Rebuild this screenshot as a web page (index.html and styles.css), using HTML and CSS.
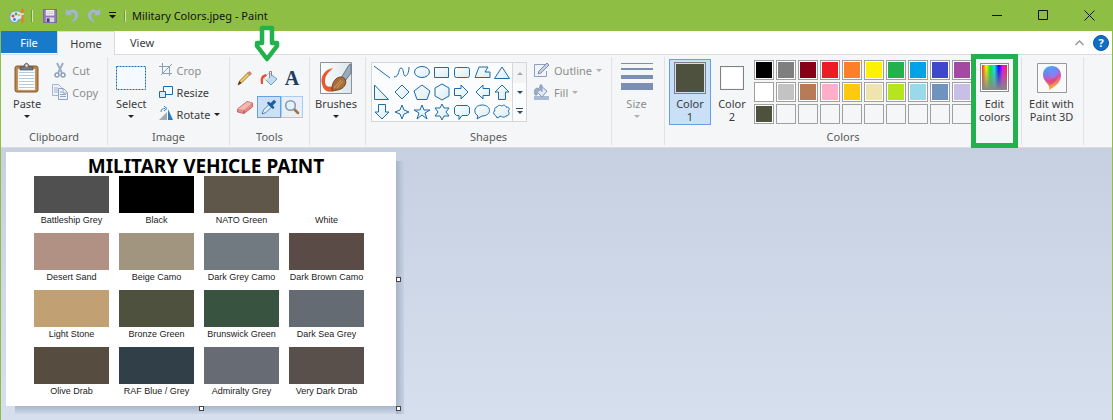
FILE: index.html
```html
<!DOCTYPE html>
<html lang="en">
<head>
<meta charset="utf-8">
<title>Military Colors.jpeg - Paint</title>
<link rel="stylesheet" href="styles.css">
</head>
<body>
<div class="window">
  <header class="titlebar">
    <svg class="app-icon" width="16" height="16" viewBox="0 0 16 16"><path d="M7 3C3 3 .5 6 .8 9.500 1 13 4 15 7 14.500c2-.3 1-2.500 3-3 2-.4 3.500-.5 3.500-3.500C13.500 5 10.500 3 7 3z" fill="#d9ecf8" stroke="#6e9fc4"/><circle cx="4" cy="8" r="1.500" fill="#e8463a"/><circle cx="7" cy="6" r="1.400" fill="#4aa84c"/><circle cx="10" cy="7" r="1.300" fill="#e9b52c"/><circle cx="5.500" cy="11.500" r="1.400" fill="#3f7fd0"/><path d="M12.500 15V6l-.5-4 1.500-2 1.500 2-.5 4v9z" fill="#ea7b25"/><path d="M12.300 5h2.400v2h-2.400z" fill="#ddd"/></svg>
    <i class="tick"></i>
    <button class="tool save" aria-label="Save"><svg width="14" height="14" viewBox="0 0 15 15"><path d="M.5.5h14v14h-14z" fill="#9078bb" stroke="#7a62a6"/><path d="M3 1h9v6H3z" fill="#f4f1fa"/><path d="M4 3h7M4 5h7" stroke="#c9bddd"/><path d="M3 9h9v5H3z" fill="#ddd6e9"/><path d="M4 10h3v4H4z" fill="#51377e"/></svg></button>
    <button class="tool undo" aria-label="Undo"><svg width="14" height="15" viewBox="0 0 14 15"><path d="M1 1v6h6L5 5c3-1.500 5 0 5 2.500S8.500 12 6 13.500c4 0 7-2.500 7-6.500S8.500 0 3 3z" fill="#a4b6d0" stroke="#9db1ca" stroke-width=".5"/></svg></button>
    <button class="tool redo" aria-label="Redo"><svg width="14" height="15" viewBox="0 0 14 15"><path d="M13 1v6H7l2-2C6 3.500 4 5 4 7.500S5.500 12 8 13.500C4 13.500 1 11 1 7S5.500 0 11 3z" fill="#a4b6d0" stroke="#9db1ca" stroke-width=".5"/></svg></button>
    <button class="tool more" aria-label="Customize Quick Access Toolbar"><svg width="7" height="7" viewBox="0 0 7 7"><path d="M0 .5h7" stroke="#111"/><path d="M0 3h7L3.500 6.500z" fill="#111"/></svg></button>
    <i class="tick"></i>
    <h1 class="title">Military Colors.jpeg - Paint</h1>
    <div class="controls">
      <button aria-label="Minimize"><svg width="11" height="11"><path d="M0 5.500h10" stroke="#111"/></svg></button>
      <button aria-label="Maximize"><svg width="11" height="11"><path d="M.5.5h9v9h-9z" fill="none" stroke="#111"/></svg></button>
      <button aria-label="Close"><svg width="11" height="11"><path d="M.5.5l10 10M10.500.5l-10 10" stroke="#111"/></svg></button>
    </div>
  </header>

  <nav class="tabs">
    <button class="tab file">File</button>
    <button class="tab active">Home</button>
    <button class="tab">View</button>
    <div class="help">
      <button aria-label="Collapse ribbon"><svg width="9" height="6"><path d="M.5 5l4-4 4 4" fill="none" stroke="#999" stroke-width="1.500"/></svg></button>
      <button class="question" aria-label="Help">?</button>
    </div>
  </nav>

  <main class="ribbon">
    <section class="group clipboard">
      <div class="group-body">
        <button class="big"><svg width="26" height="32" viewBox="0 0 26 32"><rect x="1" y="4" width="23" height="26" rx="2" fill="#b98647" stroke="#8b5c29"/><path d="M4 7h17v21H4z" fill="#fdfeff" stroke="#c5cbd2" stroke-width=".5"/><path d="M5 10.500h15M5 13.500h15M5 16.500h15M5 19.500h15M5 22.500h15M5 25.500h15" stroke="#b5cbd7"/><path d="M6 8V5h4c0-5 5-5 5 0h4v3z" fill="#777d84" stroke="#454a50" stroke-width=".7"/><circle cx="12.500" cy="3.500" r="1.200" fill="#e5e8eb"/></svg><span>Paste</span><i class="caret"></i></button>
        <div class="stack">
          <button class="row off"><svg width="16" height="16" viewBox="0 0 16 16"><path d="M5 1l5 10M11 1L6 11" stroke="#9eaec9" stroke-width="2"/><circle cx="5" cy="13" r="2" fill="none" stroke="#8d9fbd" stroke-width="1.500"/><circle cx="11" cy="13" r="2" fill="none" stroke="#8d9fbd" stroke-width="1.500"/></svg>Cut</button>
          <button class="row off"><svg width="16" height="16" viewBox="0 0 16 16"><path d="M.5.5h6l3 3v8h-9z" fill="#eef2f9" stroke="#a3b3d0"/><path d="M2 4h4M2 6h5M2 8h5" stroke="#a3b3d0"/><path d="M6.500 4.500h5l4 4v7h-9z" fill="#eef2f9" stroke="#8fa3c5"/><path d="M11 4.500V9h4M8 8h2M8 10.500h6M8 12.500h6" fill="none" stroke="#8fa3c5"/></svg>Copy</button>
        </div>
      </div>
      <h2>Clipboard</h2>
    </section>

    <section class="group image">
      <div class="group-body">
        <button class="big"><svg width="30" height="32" viewBox="0 0 30 32"><path d="M.5 4.500h29v23H.5z" fill="#f4faff" stroke="#1b6aad" stroke-dasharray="2 1"/></svg><span>Select</span><i class="caret"></i></button>
        <div class="stack">
          <button class="row off"><svg width="14" height="16" viewBox="0 0 14 16"><path d="M3.500 1v10.500H13M0 4.500h10.500V14M2 13L13 2" fill="none" stroke="#8c9db8"/></svg>Crop</button>
          <button class="row"><svg width="14" height="16" viewBox="0 0 14 16"><path d="M4.500 2.500h9v8h-9z" fill="#f7fbff" stroke="#1b6aad"/><path d="M.5 7.500h6v6h-6z" fill="#dbeaf5" stroke="#1b6aad"/></svg>Resize</button>
          <button class="row"><svg width="14" height="16" viewBox="0 0 14 16"><path d="M8 14V6L0 14z" fill="#a4a9ae"/><path d="M9 14V3l5 11z" fill="#277dbb"/><path d="M2 6c0-3 2-3.500 4-3.500M5 0l3 2.500L5 5" fill="none" stroke="#2a82d0"/></svg>Rotate<i class="caret"></i></button>
        </div>
      </div>
      <h2>Image</h2>
    </section>

    <section class="group tools">
      <div class="group-body">
        <div class="tool-grid">
          <button aria-label="Pencil"><svg width="16" height="16" viewBox="0 0 16 16"><path d="M1 15l1.500-4L11.500 2l2 2-9 9z" fill="#f4ca59" stroke="#88642b" stroke-width=".8"/><path d="M1 15l1.500-4 2 2z" fill="#49362a"/><path d="M11 2.500L12.500 1 15 3.500 13.500 5z" fill="#dc7c77"/><path d="M10.500 3l2.500 2.500" stroke="#679b78"/></svg></button>
          <button aria-label="Fill with color"><svg width="18" height="16" viewBox="0 0 18 16"><path d="M9 3l8 6-6 6-7-7z" fill="#c1dcef" stroke="#6f9ec0"/><path d="M9 3l2 2-5 5-2-2z" fill="#f2f9fd"/><path d="M9.500 8V1.500h2V6" fill="none" stroke="#888"/><path d="M6 4C1 5 0 8 1 14h2c0-5 0-7 4-8z" fill="#e65330"/></svg></button>
          <button class="letter" aria-label="Text">A</button>
          <button aria-label="Eraser"><svg width="16" height="16" viewBox="0 0 16 16"><path d="M.5 10L10 2.500l5.500 1.500v4L7 14.500.5 13z" fill="#e58c88" stroke="#b75759" stroke-width=".8"/><path d="M1 10l9-7 5 1-8 7z" fill="#f6b7b0"/><path d="M7 11v3.500" stroke="#b75759"/></svg></button>
          <button class="chosen" aria-label="Color picker"><svg width="16" height="16" viewBox="0 0 16 16"><path d="M1 15l1.500-4L8 5.500 10.500 8 5 13.500z" fill="#dfeef9" stroke="#5285ad"/><path d="M7.500 4l4.500 4.500M10 5.500l3-3 .5.500-3 3z" fill="#205f9d" stroke="#205f9d" stroke-width="2.500" stroke-linecap="round"/></svg></button>
          <button class="hovered" aria-label="Magnifier"><svg width="16" height="16" viewBox="0 0 16 16"><path d="M10 10l4 4" stroke="#a86d48" stroke-width="2.500" stroke-linecap="round"/><circle cx="6.500" cy="6.500" r="4.800" fill="#e4f2fc" stroke="#8799a9" stroke-width="1.500"/></svg></button>
        </div>
      </div>
      <h2>Tools</h2>
      <svg class="pointer" width="26" height="39" viewBox="0 0 26 39"><path d="M8 3h10v15h5v3l-10 13L3 21v-3h5z" fill="#fff" stroke="#22b14c" stroke-width="4.500" stroke-linejoin="round"/></svg>
    </section>

    <section class="group brushes">
      <div class="group-body">
        <button class="big"><svg width="32" height="32" viewBox="0 0 32 32"><defs><linearGradient id="paper"><stop stop-color="#fff"/><stop offset="1" stop-color="#dbe4ea"/></linearGradient></defs><path d="M.5.5h31v31H.5z" fill="url(#paper)" stroke="#8c9299"/><path d="M13 6C3 8-1 17 3 25c3 6 9 6 14 2l-4-3c-6 2-8-1-8-5 0-6 4-9 8-13z" fill="#e9592f"/><path d="M21 16l8-13 2-1v9l-6 8z" fill="#9cabb9" stroke="#667688"/><path d="M12 27c0-7 4-12 9-12 4 0 6 4 4 8s-6 5-13 6z" fill="#a76e39" stroke="#70441f"/><path d="M14 26l7-8M17 26l6-7" stroke="#d5a46b"/></svg><span>Brushes</span><i class="caret"></i></button>
      </div>
    </section>

    <section class="group shapes">
      <div class="group-body">
        <div class="gallery">
          <svg class="shape-list" width="140" height="58" viewBox="0 0 140 58"><defs><linearGradient id="ice" x2="1" y2="1"><stop stop-color="#fff"/><stop offset="1" stop-color="#d7ecf3"/></linearGradient></defs><g fill="url(#ice)" stroke="#1d6aa8">
            <path d="M2 3l16 12" fill="none"/><path d="M22 14c6 0 4-9 7-9s2 8 4 8 4-3 4-9" fill="none"/><ellipse cx="50" cy="9" rx="7.500" ry="5.500"/><path d="M62.500 4.500h14v10h-14z"/><rect x="82.500" y="4.500" width="15" height="10" rx="2"/><path d="M107 4h9l-3 5h5v5.500h-15z"/><path d="M130 4l7.500 11.500h-15z"/>
            <path d="M2.500 22v14.500h14z"/><path d="M30 22l7 7-7 7-7-7z"/><path d="M50 22l8 6-3 8.500H45L42 28z"/><path d="M70 21l7 4v8l-7 4-7-4v-8z"/><path d="M82.500 25.500H89V22l7 7-7 7v-3.500h-6.500z"/><path d="M117.500 25.500H111V22l-7 7 7 7v-3.500h6.500z"/><path d="M130 22l7 7h-3.500v7.500h-7V29H123z"/>
            <path d="M6.500 41.500h7V49H17l-7 7-7-7h3.500z"/><path d="M30 42l2 5 5 2-5 2-2 5-2-5-5-2 5-2z"/><path d="M50 42l2 5h6l-5 3 2 6-5-4-5 4 2-6-5-3h6z"/><path d="M70 41l2 4h5l-3 4 3 4h-5l-2 4-2-4h-5l3-4-3-4h5z"/><path d="M84.500 42.500h11l2 2v6l-2 2H90l-3 4v-4h-2.500l-2-2v-6z"/><path d="M106 53c-6-4-3-11 4-11 10 0 10 11 0 11l-5 3z"/><path d="M125 44c2-3 4-1 5-1 2-2 4 0 4 1 4 0 4 3 2 4 2 2 1 5-2 5-2 2-4 1-5 0l-4 2c0-2-2-2-3-4-1-2 0-3 1-3-1-2 0-4 2-4z"/>
          </g></svg>
          <div class="scroll">
            <button class="faded" aria-label="Scroll up"><i class="caret up"></i></button>
            <button aria-label="Scroll down"><i class="caret"></i></button>
            <button class="expand" aria-label="More shapes"><i class="caret"></i></button>
          </div>
        </div>
        <div class="stack">
          <button class="row off"><svg width="17" height="16" viewBox="0 0 17 16"><path d="M12 2.500H1.500v12h12V9" fill="#f1f4fa" stroke="#8e9fbb"/><path d="M5 12l1-3 8-8 2 2-8 8z" fill="#c4d0e2" stroke="#7e91b0"/></svg>Outline<i class="caret"></i></button>
          <button class="row off"><svg width="17" height="16" viewBox="0 0 17 16"><path d="M1 12h15v4H1z" fill="#aabbd5"/><path d="M8 2l6 5-5 6-6-6z" fill="#e1e8f2" stroke="#8498b8"/><path d="M9 8V1H7v5M4 4C1 5 1 8 2 11h2c0-3 1-4 3-5z" fill="#9aacc9" stroke="#8da0bf"/></svg>Fill<i class="caret"></i></button>
        </div>
      </div>
      <h2>Shapes</h2>
    </section>

    <section class="group size">
      <div class="group-body">
        <button class="big off"><svg width="32" height="32" viewBox="0 0 32 32" fill="#7b8fb2"><path d="M0 1h32v1H0zM0 6h32v2H0zM0 13h32v4H0zM0 21h32v7H0z"/></svg><span>Size</span><i class="caret"></i></button>
      </div>
    </section>

    <section class="group colors">
      <div class="group-body">
        <button class="color-pick current"><i class="well"></i><span>Color<br>1</span></button>
        <button class="color-pick"><i class="well second"></i><span>Color<br>2</span></button>
        <div class="palette">
          <button aria-label="Black" class="c-black"></button><button aria-label="Gray" class="c-gray"></button><button aria-label="Dark red" class="c-maroon"></button><button aria-label="Red" class="c-red"></button><button aria-label="Orange" class="c-orange"></button><button aria-label="Yellow" class="c-yellow"></button><button aria-label="Green" class="c-green"></button><button aria-label="Turquoise" class="c-turquoise"></button><button aria-label="Indigo" class="c-indigo"></button><button aria-label="Purple" class="c-purple"></button>
          <button aria-label="White" class="c-white"></button><button aria-label="Light gray" class="c-silver"></button><button aria-label="Brown" class="c-brown"></button><button aria-label="Rose" class="c-rose"></button><button aria-label="Gold" class="c-gold"></button><button aria-label="Light yellow" class="c-cream"></button><button aria-label="Lime" class="c-lime"></button><button aria-label="Light turquoise" class="c-sky"></button><button aria-label="Blue gray" class="c-steel"></button><button aria-label="Lavender" class="c-lavender"></button>
          <button aria-label="Custom olive" class="c-olive"></button><button aria-label="Empty 2" class="empty"></button><button aria-label="Empty 3" class="empty"></button><button aria-label="Empty 4" class="empty"></button><button aria-label="Empty 5" class="empty"></button><button aria-label="Empty 6" class="empty"></button><button aria-label="Empty 7" class="empty"></button><button aria-label="Empty 8" class="empty"></button><button aria-label="Empty 9" class="empty"></button><button aria-label="Empty 10" class="empty"></button>
        </div>
        <button class="big edit"><i class="spectrum"></i><span>Edit<br>colors</span></button>
      </div>
      <h2>Colors</h2>
    </section>

    <section class="group paint3d">
      <div class="group-body">
        <button class="big"><svg width="30" height="30" viewBox="0 0 30 30"><defs><linearGradient id="drop" x1="0" y1="0" x2=".3" y2="1"><stop stop-color="#20c9ef"/><stop offset=".35" stop-color="#7a7bf0"/><stop offset=".65" stop-color="#e252a8"/><stop offset="1" stop-color="#ffb021"/></linearGradient></defs><path d="M.5.5h29v29H.5z" fill="#f9f9fa" stroke="#999"/><path d="M12 27c2-6-6-8-6-15C6 6 10 3 15 3s9 4 9 9c0 7-5 11-12 15z" fill="url(#drop)"/><circle cx="16" cy="10" r="5" fill="#6d91ff" opacity=".6"/><path d="M8 15c3 4 9 2 13-3-1 6-4 8-8 10-1-3-4-4-5-7z" fill="#e14273" opacity=".7"/></svg><span>Edit with<br>Paint 3D</span></button>
      </div>
    </section>
  </main>

  <div class="workspace">
    <article class="paper">
      <h2>MILITARY VEHICLE PAINT</h2>
      <div class="chart">
        <figure><i class="p-battleship"></i><figcaption>Battleship Grey</figcaption></figure>
        <figure><i class="p-black"></i><figcaption>Black</figcaption></figure>
        <figure><i class="p-nato"></i><figcaption>NATO Green</figcaption></figure>
        <figure><i class="p-white"></i><figcaption>White</figcaption></figure>
        <figure><i class="p-sand"></i><figcaption>Desert Sand</figcaption></figure>
        <figure><i class="p-beige"></i><figcaption>Beige Camo</figcaption></figure>
        <figure><i class="p-grey-camo"></i><figcaption>Dark Grey Camo</figcaption></figure>
        <figure><i class="p-brown-camo"></i><figcaption>Dark Brown Camo</figcaption></figure>
        <figure><i class="p-stone"></i><figcaption>Light Stone</figcaption></figure>
        <figure><i class="p-bronze"></i><figcaption>Bronze Green</figcaption></figure>
        <figure><i class="p-brunswick"></i><figcaption>Brunswick Green</figcaption></figure>
        <figure><i class="p-sea"></i><figcaption>Dark Sea Grey</figcaption></figure>
        <figure><i class="p-olive"></i><figcaption>Olive Drab</figcaption></figure>
        <figure><i class="p-raf"></i><figcaption>RAF Blue / Grey</figcaption></figure>
        <figure><i class="p-admiralty"></i><figcaption>Admiralty Grey</figcaption></figure>
        <figure><i class="p-drab"></i><figcaption>Very Dark Drab</figcaption></figure>
      </div>
      <i class="handle right"></i><i class="handle bottom"></i><i class="handle corner"></i>
    </article>
  </div>
</div>
</body>
</html>
```
FILE: styles.css
```css
* { box-sizing: border-box; }
body { margin: 0; font: 12px/13px "Noto Sans", "Open Sans", sans-serif; color: #3b3b3b; }
button { font: inherit; color: inherit; background: none; border: 0; padding: 0; margin: 0; }
h1, h2, figure { margin: 0; font: inherit; }
i { display: block; flex: none; }
svg { display: block; flex: none; }
.window { min-height: 100vh; display: flex; flex-direction: column; border: solid #8fbe44; border-width: 0 1px; }

.titlebar { display: flex; align-items: center; height: 31px; padding-left: 8px; background: #8fbe44; color: #111; }
.tick { width: 2px; height: 12px; background: #d2e4b2; border-left: 1px solid #74993a; }
.app-icon { margin-right: 6px; }
.save { margin-left: 10px; }
.undo, .redo { margin-left: 8px; }
.more { margin: 0 8px 0 8px; }
.title { margin-left: 6px; font-size: 11px; }
.controls { display: flex; margin-left: auto; }
.controls button { display: grid; place-items: center; width: 46px; height: 31px; }

.tabs { display: flex; background: #fff; border-bottom: 1px solid #dadbdc; height: 24px; font-size: 11px; }
.tab { padding: 0 15px; }
.tab.file { background: #1979ca; color: #fff; width: 56px; margin-bottom: 1px; padding: 0; }
.tab.active { background: #f5f6f7; border: solid #dadbdc; border-width: 1px 1px 0; width: 58px; padding: 0; margin-bottom: -1px; }
.help { display: flex; align-items: center; gap: 9px; margin-left: auto; padding-right: 3px; }
.question { width: 16px; height: 16px; border-radius: 50%; background: #0f6fc6; border: 1px solid #0b559c; color: #fff; font-weight: bold; line-height: 14px; }

.ribbon { display: flex; min-height: 93px; padding: 2px 0; background: #f5f6f7; border-bottom: 1px solid #dadbdc; font-size: 11px; }
.group { position: relative; flex: none; display: flex; flex-direction: column; justify-content: space-between; border-right: 1px solid #e1e2e4; }
.group h2 { text-align: center; color: #5a5a5a; padding-bottom: 2px; }
.group-body { display: flex; align-items: flex-start; padding-top: 5px; }
.clipboard { width: 107px; }
.image { width: 122px; }
.tools { width: 80px; }
.brushes { width: 56px; }
.shapes { width: 246px; }
.size { width: 53px; }
.colors { width: 357px; }
.paint3d { width: 62px; }

.big { display: flex; flex-direction: column; align-items: center; }
.big span { padding: 3px 0 5px; }
.caret { width: 0; height: 0; border: solid transparent; border-width: 3px 3px 0; border-top-color: #222; }
.caret.up { border-width: 0 3px 3px; border-bottom-color: #aaa; }
.off { color: #8d8d8d; }
.off .caret { border-top-color: #b0b0b0; }
.stack { display: flex; flex-direction: column; gap: 6px; }
.row { display: flex; align-items: center; gap: 4px; height: 16px; }

.clipboard .group-body { gap: 11px; padding-left: 12px; }
.image .group-body { gap: 12px; padding-left: 8px; }
.brushes .group-body, .size .group-body, .paint3d .group-body { justify-content: center; }
.brushes .group-body, .size .group-body { padding-right: 3px; }
.paint3d .group-body { padding-right: 2px; }

.tool-grid { display: grid; grid-template-columns: 24px 24px 22px; grid-auto-rows: 22px; row-gap: 7px; padding: 5px 0 0 3px; }
.tool-grid button { display: grid; place-items: center; }
.tool-grid .letter { font: bold 20px/20px "Liberation Serif", serif; color: #203c5d; }
.tool-grid .chosen { background: #c9e0f7; border: 1px solid #62a2e4; }
.tool-grid .hovered { background: #e8eff7; border: 1px solid #a4cef9; }
.pointer { position: absolute; left: 24px; top: -32px; }

.shapes .group-body { gap: 6px; padding-left: 5px; }
.gallery { display: flex; border: 1px solid #d5d6d8; background: #fbfcfd; }
.scroll { display: grid; grid-template-rows: 20px 18px 20px; width: 14px; border-left: 1px solid #d5d6d8; }
.scroll button { display: grid; place-items: center; }
.scroll .caret { border-top-color: #344961; }
.scroll .up { border-top-color: transparent; }
.scroll .faded { background: #f3f4f5; }
.scroll .expand { align-content: center; row-gap: 2px; }
.scroll .expand::before { content: ""; width: 7px; height: 1px; background: #344961; }

.colors .group-body { padding: 2px 3px 0 4px; }
.color-pick { display: flex; flex-direction: column; align-items: center; width: 42px; height: 66px; padding-top: 3px; border: 1px solid transparent; }
.color-pick.current { background: #c9e0f7; border-color: #62a2e4; }
.well { width: 32px; height: 32px; border: 1px solid #808080; padding: 1px; background: #4e513e content-box; }
.current .well { margin-top: -1px; margin-bottom: 3px; }
.well.second { width: 24px; height: 24px; margin: 3px 0 7px; background-color: #fff; }
.palette { display: grid; grid-template-columns: repeat(10, 20px); grid-auto-rows: 20px; gap: 2px; padding-top: 1px; margin-left: 1px; }
.palette button { border: 1px solid #a0a0a0; box-shadow: inset 0 0 0 1px #fff; }
.palette .empty { box-shadow: none; }
.edit { position: relative; width: 47px; margin-left: -1px; padding-top: 4px; }
.edit::after { content: ""; position: absolute; left: 0; right: 0; top: -5px; bottom: -20px; border: 5px solid #22b14c; }
.edit span { padding-top: 5px; }
.spectrum { width: 29px; height: 29px; border: 1px solid #8c8c8c; padding: 1px; background: linear-gradient(transparent, #888) content-box, linear-gradient(90deg, #f22, #ff0, #0e2, #0ee, #00f, #f0f, #f22) content-box, #fff; }
.paint3d svg { margin-top: 1px; }
.paint3d span { padding-top: 4px; }

.c-black { background: #000; } .c-gray { background: #7f7f7f; } .c-maroon { background: #880015; } .c-red { background: #ed1c24; } .c-orange { background: #ff7f27; }
.c-yellow { background: #fff200; } .c-green { background: #22b14c; } .c-turquoise { background: #00a2e8; } .c-indigo { background: #3f48cc; } .c-purple { background: #a349a4; }
.c-white { background: #fff; } .c-silver { background: #c3c3c3; } .c-brown { background: #b97a57; } .c-rose { background: #ffaec9; } .c-gold { background: #ffc90e; }
.c-cream { background: #efe4b0; } .c-lime { background: #b5e61d; } .c-sky { background: #99d9ea; } .c-steel { background: #7092be; } .c-lavender { background: #c8bfe7; } .c-olive { background: #4e513e; }

.workspace { flex: 1; padding: 4px 5px 14px; background: linear-gradient(#c6d0e1, #d5dfed); }
.paper { position: relative; width: 390px; padding: 5px 32px 7px 28px; background: #fff; color: #222; }
.paper::before, .paper::after { content: ""; position: absolute; }
.paper::before { left: 100%; top: 9px; bottom: -8px; width: 8px; background: linear-gradient(90deg, #a7b5ca, #c6d1e2); }
.paper::after { top: 100%; left: 9px; right: 0; height: 8px; background: linear-gradient(#a7b5ca, #ced9e8); }
.paper h2 { font: bold 19px/19px "Noto Sans", "Open Sans", sans-serif; color: #000; text-align: center; white-space: nowrap; padding-left: 14px; }
.chart { display: grid; grid-template-columns: repeat(4, 75px); gap: 5px 10px; }
.chart i { height: 37px; }
.chart figcaption { font: 9px/15px "Liberation Sans", Arial, sans-serif; text-align: center; white-space: nowrap; }
.handle { position: absolute; z-index: 1; width: 5px; height: 5px; background: #fff; border: 1px solid #444; }
.handle.right { left: 100%; top: 50%; margin-top: -2px; }
.handle.bottom { left: 50%; top: 100%; margin-left: -2px; }
.handle.corner { left: 100%; top: 100%; }
.p-battleship { background: #505050; } .p-black { background: #000; } .p-nato { background: #5f5749; } .p-white { background: #fff; }
.p-sand { background: #b09184; } .p-beige { background: #a19580; } .p-grey-camo { background: #727a81; } .p-brown-camo { background: #5b4b47; }
.p-stone { background: #c1a174; } .p-bronze { background: #4e513e; } .p-brunswick { background: #385440; } .p-sea { background: #656b73; }
.p-olive { background: #564d40; } .p-raf { background: #303f48; } .p-admiralty { background: #676c74; } .p-drab { background: #5a504b; }
```
